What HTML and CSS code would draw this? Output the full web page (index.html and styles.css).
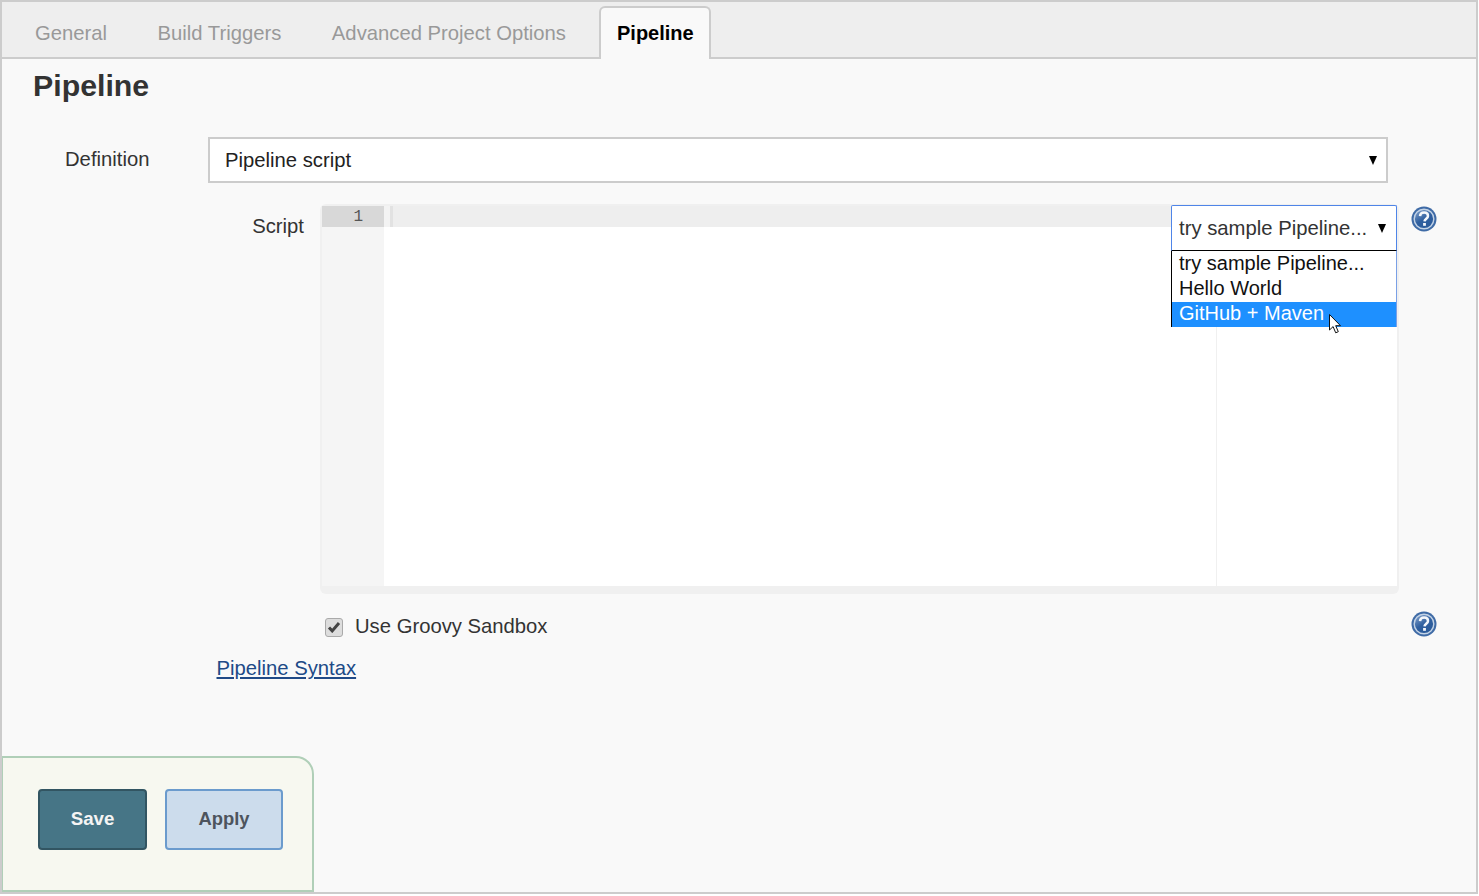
FILE: index.html
```html
<!DOCTYPE html>
<html lang="en">
<head>
<meta charset="utf-8">
<title>Pipeline</title>
<link rel="stylesheet" href="styles.css">
</head>
<body>
<div class="frame">
  <nav class="tabs">
    <a class="tab">General</a>
    <a class="tab">Build Triggers</a>
    <a class="tab">Advanced Project Options</a>
    <a class="tab active">Pipeline</a>
  </nav>
  <main class="content">
    <h1 class="title">Pipeline</h1>
    <div class="def-row">
      <label class="def-label">Definition</label>
      <div class="select">
        <span>Pipeline script</span>
        <span class="arrow"></span>
      </div>
    </div>
    <div class="script-row">
      <label class="script-label">Script</label>
      <div class="editor">
        <div class="active-strip">
          <div class="line-no">1</div>
          <div class="line-gap"></div>
          <div class="line-bar"></div>
        </div>
        <div class="editor-body">
          <div class="gutter"></div>
          <div class="code"><div class="print-margin"></div></div>
        </div>
        <div class="samples">
          <div class="samples-box">
            <span>try sample Pipeline...</span>
            <span class="arrow"></span>
          </div>
          <ul class="samples-list">
            <li>try sample Pipeline...</li>
            <li>Hello World</li>
            <li class="hl">GitHub + Maven</li>
          </ul>
          <svg class="cursor" width="14" height="22" viewBox="0 0 14 22"><path d="M1.5 1.5V17l3.6-3.4 2.6 6.2 2.6-1.1-2.6-6h4.8z" fill="#fff" stroke="#111" stroke-width="1"/></svg>
        </div>
      </div>
      <svg class="help" width="26" height="26" viewBox="0 0 26 26"><use href="#help-icon"/></svg>
    </div>
    <div class="sandbox-row">
      <span class="check"><svg width="14" height="12" viewBox="0 0 14 12"><path d="M2 6.5l3.2 3.4L12 2" fill="none" stroke="#444" stroke-width="3"/></svg></span>
      <span class="sandbox-label">Use Groovy Sandbox</span>
      <svg class="help help-end" width="26" height="26" viewBox="0 0 26 26"><use href="#help-icon"/></svg>
    </div>
    <div class="syntax-row"><a class="syntax" href="#">Pipeline Syntax</a></div>
  </main>
  <div class="bottom">
    <button class="btn save">Save</button>
    <button class="btn apply">Apply</button>
  </div>
</div>
<svg width="0" height="0" class="defs">
  <defs>
    <linearGradient id="hg" x1="0.2" y1="0" x2="0.8" y2="1">
      <stop offset="0" stop-color="#7f9fca"/>
      <stop offset="0.5" stop-color="#2f5f9f"/>
      <stop offset="1" stop-color="#2a5a9a"/>
    </linearGradient>
    <symbol id="help-icon" viewBox="0 0 26 26">
      <circle cx="13" cy="13" r="12.5" fill="#3f6ba6"/>
      <circle cx="13" cy="13" r="9.8" fill="url(#hg)" stroke="#c3d3e6" stroke-width="1.4"/>
      <path d="M9 10.2c.2-2.4 1.9-3.6 4.1-3.6 2.3 0 3.9 1.3 3.9 3.3 0 2.7-3.4 2.9-3.5 5.5" fill="none" stroke="#f4f7fb" stroke-width="2.5"/>
      <rect x="12.1" y="17" width="2.8" height="2.8" fill="#f4f7fb"/>
    </symbol>
  </defs>
</svg>
</body>
</html>
```
FILE: styles.css
```css
* { box-sizing: border-box; }
html, body { margin: 0; padding: 0; background: #fff; }
body { font-family: "Liberation Sans", Arial, sans-serif; font-size: 20.25px; color: #333; }
.defs { display: block; }
.frame {
  position: relative;
  width: 1478px;
  height: 894px;
  border: 2px solid #ccc;
  background: #f9f9f9;
  display: flex;
  flex-direction: column;
}
.tabs {
  height: 57px;
  background: #eee;
  border-bottom: 2px solid #ccc;
  display: flex;
  align-items: flex-end;
  gap: 0;
  padding-left: 33px;
  flex: none;
}
.tab {
  height: 53px;
  margin-bottom: -2px;
  color: #999;
  font-size: 20.25px;
  line-height: 54px;
  margin-right: 50.5px;
  white-space: nowrap;
}
.tab.active {
  margin-left: -17.5px;
  padding: 0 15.5px 0 16px;
  margin-right: 0;
  background: #f9f9f9;
  border: 2px solid #ccc;
  border-bottom: 0;
  border-radius: 6px 6px 0 0;
  color: #000;
  font-weight: bold;
  font-size: 20px;
  line-height: 50px;
}
.content { flex: 1; display: flex; flex-direction: column; min-height: 0; }
.title {
  margin: 8px 0 0 31px;
  font-size: 30.3px;
  line-height: 38px;
  font-weight: bold;
  color: #333;
}
.def-row { display: flex; align-items: center; margin-top: 32px; }
.def-label { width: 206px; padding-left: 63px; flex: none; position: relative; top: -1px; }
.select {
  width: 1180px;
  height: 46px;
  border: 2px solid #ccc;
  background: #fff;
  color: #222;
  padding: 0 9px 0 15px;
  display: flex;
  align-items: center;
  justify-content: space-between;
}
.arrow {
  width: 0;
  height: 0;
  border-left: 4.5px solid transparent;
  border-right: 4.5px solid transparent;
  border-top: 9px solid #000;
}
.script-row { display: flex; align-items: flex-start; margin-top: 21px; }
.script-label { width: 302px; text-align: right; flex: none; padding-top: 11px; }
.editor {
  position: relative;
  margin-left: 16px;
  width: 1079px;
  height: 390px;
  padding: 2px 2px 8px 2px;
  background: #f0f0f0;
  border-radius: 6px;
  display: flex;
  flex-direction: column;
}
.active-strip { display: flex; height: 21px; flex: none; background: #eee; }
.line-no {
  width: 62px;
  background: #d8d8d8;
  color: #555;
  font-family: "Liberation Mono", monospace;
  font-size: 16px;
  line-height: 23px;
  text-align: right;
  padding-right: 21px;
}
.line-gap { width: 6px; background: #f3f3f3; }
.line-bar { width: 3px; background: #e2e2e2; }
.editor-body { flex: 1; display: flex; }
.gutter { width: 62px; background: #f5f5f5; }
.code { position: relative; flex: 1; background: #fff; }
.print-margin { position: absolute; top: 0; bottom: 0; left: 832px; width: 1px; background: #f0f0f0; }
.samples {
  position: absolute;
  left: 851px;
  top: 1px;
  width: 226px;
}
.samples-box {
  height: 46px;
  background: #fff;
  border: 1px solid #4f85e8;
  border-bottom-color: #000;
  border-radius: 2px 2px 0 0;
  padding: 0 10px 0 7px;
  display: flex;
  align-items: center;
  justify-content: space-between;
  color: #333;
  font-size: 20.3px;
}
.samples-list {
  margin: 0;
  padding: 0;
  list-style: none;
  background: #fff;
  border-left: 1px solid #000;
  border-right: 1px solid #7aa0e6;
  color: #111;
  font-size: 20px;
  line-height: 23px;
}
.samples-list li { padding-left: 7px; height: 25px; }
.samples-list li:first-child { height: 26px; line-height: 24px; }
.samples-list .hl { background: #1e90ff; color: #fff; }
.cursor { position: absolute; left: 157px; top: 108px; }
.help { flex: none; margin: 2px 0 0 12px; }
.sandbox-row { display: flex; align-items: center; margin-top: 18px; height: 26px; }
.check {
  width: 18px;
  height: 19px;
  margin-left: 323px;
  margin-top: 4px;
  background: #ddd;
  border: 1px solid #aaa;
  border-radius: 3px;
  display: flex;
  align-items: center;
  justify-content: center;
  flex: none;
}
.sandbox-label { margin-left: 12px; position: relative; top: 1px; }
.help-end { margin-left: auto; margin-right: 39px; margin-top: -2px; }
.syntax-row { margin-top: 18px; padding-left: 214.5px; line-height: 24px; }
.syntax { color: #204a87; text-decoration: underline; }
.bottom {
  position: absolute;
  left: 0;
  bottom: 0;
  width: 312px;
  height: 136px;
  background: #f7f8f0;
  border: 2px solid #b0cfb8;
  border-left-width: 1px;
  border-radius: 0 18px 0 0;
  padding: 31px 0 0 35px;
  display: flex;
  align-items: flex-start;
  gap: 18px;
}
.btn {
  height: 61px;
  font-family: "Liberation Sans", Arial, sans-serif;
  font-weight: bold;
  border-radius: 4px;
  border: 2px solid;
  padding: 0 0 2px;
}
.save { width: 109px; background: #467586; border-color: #325562; color: #f4f4f4; font-size: 18.7px; }
.apply { width: 118px; background: #ccdcec; border-color: #6b9bcd; color: #4d545d; font-size: 18.4px; }
```
